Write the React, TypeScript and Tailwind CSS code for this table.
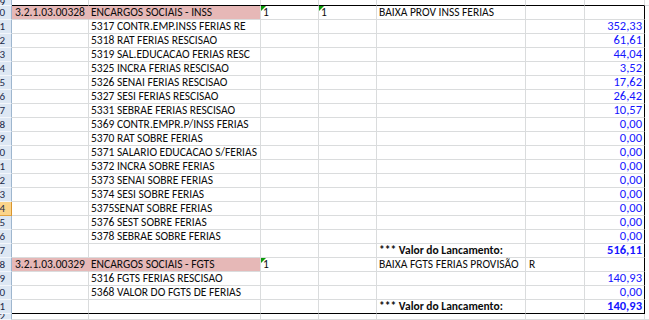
import React from "react";

type Row = {
  n: number;
  a?: string;
  b?: string;
  c?: string;
  d?: string;
  e?: string;
  f?: string;
  g?: string;
  pink?: boolean;
  total?: boolean;
};

const rows: Row[] = [
  { n: 10, a: "3.2.1.03.00328", b: "ENCARGOS SOCIAIS - INSS", c: "1", d: "1", e: "BAIXA PROV INSS FERIAS", pink: true },
  { n: 11, b: "5317 CONTR.EMP.INSS FERIAS RE", g: "352,33" },
  { n: 12, b: "5318 RAT FERIAS RESCISAO", g: "61,61" },
  { n: 13, b: "5319 SAL.EDUCACAO FERIAS RESC", g: "44,04" },
  { n: 14, b: "5325 INCRA FERIAS RESCISAO", g: "3,52" },
  { n: 15, b: "5326 SENAI FERIAS RESCISAO", g: "17,62" },
  { n: 16, b: "5327 SESI FERIAS RESCISAO", g: "26,42" },
  { n: 17, b: "5331 SEBRAE FERIAS RESCISAO", g: "10,57" },
  { n: 18, b: "5369 CONTR.EMPR.P/INSS FERIAS", g: "0,00" },
  { n: 19, b: "5370 RAT SOBRE FERIAS", g: "0,00" },
  { n: 20, b: "5371 SALARIO EDUCACAO S/FERIAS", g: "0,00" },
  { n: 21, b: "5372 INCRA SOBRE FERIAS", g: "0,00" },
  { n: 22, b: "5373 SENAI SOBRE FERIAS", g: "0,00" },
  { n: 23, b: "5374 SESI SOBRE FERIAS", g: "0,00" },
  { n: 24, b: "5375SENAT SOBRE FERIAS", g: "0,00" },
  { n: 25, b: "5376 SEST SOBRE FERIAS", g: "0,00" },
  { n: 26, b: "5378 SEBRAE SOBRE FERIAS", g: "0,00" },
  { n: 27, e: "*** Valor do Lancamento:", g: "516,11", total: true },
  { n: 28, a: "3.2.1.03.00329", b: "ENCARGOS SOCIAIS - FGTS", c: "1", e: "BAIXA FGTS FERIAS PROVISÃO", f: "R", pink: true },
  { n: 29, b: "5316 FGTS FERIAS RESCISAO", g: "140,93" },
  { n: 30, b: "5368 VALOR DO FGTS DE FERIAS", g: "0,00" },
  { n: 31, e: "*** Valor do Lancamento:", g: "140,93", total: true },
];

const font = { fontFamily: "Carlito, Calibri, Lato, 'Liberation Sans', sans-serif" };

// little green "number stored as text" flag
function Flag() {
  return (
    <svg width="5" height="5" className="absolute left-0 top-0">
      <polygon points="0,0 5,0 0,5" fill="#0a9a0a" />
    </svg>
  );
}

function Header({ n, h, active }: { n: number; h: string; active?: boolean }) {
  return (
    <div
      className={`${h} w-[12px] shrink-0 overflow-hidden flex justify-end items-center pr-[6px] border-r border-b text-[11px] leading-none text-[#1b2a4a] ${
        active ? "bg-[#fbd48a] border-r-[#d8952e] border-b-[#e3a33f]" : "bg-[#dde7f3] border-r-[#9eb6ce] border-b-[#f3f6fb]"
      }`}
    >
      <span className="whitespace-nowrap">{n}</span>
    </div>
  );
}

function Cell({
  w,
  children,
  cls = "",
}: {
  w: string;
  children?: React.ReactNode;
  cls?: string;
}) {
  return (
    <div className={`${w} shrink-0 relative flex items-center whitespace-nowrap border-r border-b border-[#dadcdd] ${cls}`}>
      {children}
    </div>
  );
}

function EdgeRow({ n, black }: { n: number; black: boolean }) {
  const line = black ? "border-b-black" : "";
  return (
    <div className="flex h-[6px]">
      <Header n={n} h="h-[6px]" />
      <Cell w="w-[77px]" cls={line} />
      <Cell w="w-[172px]" cls={line} />
      <Cell w="w-[58px]" cls={line} />
      <Cell w="w-[58px]" cls={line} />
      <Cell w="w-[149px]" cls={line} />
      <Cell w="w-[59px]" cls={line} />
      <Cell w="w-[60px]" cls={line} />
      <div className="w-[4px] shrink-0 border-b border-[#dadcdd]" />
    </div>
  );
}

export default function App() {
  return (
    <div className="w-[649px] h-[320px] overflow-hidden bg-white text-[#0c0c0c] text-[11.5px]" style={font}>
      <EdgeRow n={9} black />
      {rows.map((r, i) => {
        const last = i === rows.length - 1;
        const bottom = last ? "border-b-black" : "";
        const pink = r.pink ? "bg-[#e6b8b7]" : "";
        return (
          <div key={r.n} className="flex h-[14px]">
            <Header n={r.n} h="h-[14px]" active={r.n === 24} />
            <Cell w="w-[77px]" cls={`${pink} ${r.pink ? "border-r-[#e6b8b7]" : ""} pl-[3px] ${bottom}`}>
              {r.a}
            </Cell>
            <Cell w="w-[172px]" cls={`${pink} pl-[2px] ${bottom}`}>
              {r.b}
            </Cell>
            <Cell w="w-[58px]" cls={`pl-[2px] ${bottom}`}>
              {r.c && <Flag />}
              {r.c}
            </Cell>
            <Cell w="w-[58px]" cls={`pl-[2px] ${bottom}`}>
              {r.d && <Flag />}
              {r.d}
            </Cell>
            <Cell w="w-[149px]" cls={`pl-[2px] z-10 ${r.total ? "font-bold" : ""} ${bottom}`}>
              {r.e}
            </Cell>
            <Cell w="w-[59px]" cls={`pl-[3px] ${bottom}`}>
              {r.f}
            </Cell>
            <Cell
              w="w-[60px]"
              cls={`justify-end pr-[2px] border-r-black text-[12.5px] text-[#1515ff] ${r.total ? "font-bold" : ""} ${bottom}`}
            >
              {r.g}
            </Cell>
            <div className="w-[4px] shrink-0 border-b border-white" />
          </div>
        );
      })}
      <EdgeRow n={32} black={false} />
    </div>
  );
}
